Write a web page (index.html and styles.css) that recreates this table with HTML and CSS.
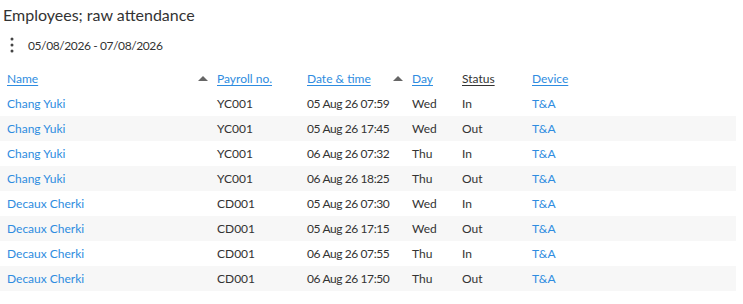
FILE: index.html
```html
<!DOCTYPE html>
<html>
<head>
<meta charset="utf-8">
<link rel="stylesheet" href="styles.css">
</head>
<body>
<div class="page">
  <h1 class="title">Employees; raw attendance</h1>
  <div class="range">
    <svg class="kebab" width="4" height="16" viewBox="0 0 4 16"><circle cx="2" cy="2" r="1.5"/><circle cx="2" cy="8" r="1.5"/><circle cx="2" cy="14" r="1.5"/></svg>
    <span class="num">05/08/2026 - 07/08/2026</span>
  </div>
  <table class="grid">
    <colgroup>
      <col class="c-name"><col class="c-pay"><col class="c-date"><col class="c-day"><col class="c-status"><col class="c-dev">
    </colgroup>
    <thead>
      <tr>
        <th><div class="hd"><a href="#">Name</a><span class="arrow"></span></div></th>
        <th><a href="#">Payroll no.</a></th>
        <th><div class="hd"><a href="#">Date &amp; time</a><span class="arrow"></span></div></th>
        <th><a href="#">Day</a></th>
        <th><span class="plain">Status</span></th>
        <th><a href="#">Device</a></th>
      </tr>
    </thead>
    <tbody>
      <tr><td><a href="#">Chang Yuki</a></td><td>YC001</td><td class="num">05 Aug 26 07:59</td><td>Wed</td><td>In</td><td><a href="#">T&amp;A</a></td></tr>
      <tr><td><a href="#">Chang Yuki</a></td><td>YC001</td><td class="num">05 Aug 26 17:45</td><td>Wed</td><td>Out</td><td><a href="#">T&amp;A</a></td></tr>
      <tr><td><a href="#">Chang Yuki</a></td><td>YC001</td><td class="num">06 Aug 26 07:32</td><td>Thu</td><td>In</td><td><a href="#">T&amp;A</a></td></tr>
      <tr><td><a href="#">Chang Yuki</a></td><td>YC001</td><td class="num">06 Aug 26 18:25</td><td>Thu</td><td>Out</td><td><a href="#">T&amp;A</a></td></tr>
      <tr><td><a href="#">Decaux Cherki</a></td><td>CD001</td><td class="num">05 Aug 26 07:30</td><td>Wed</td><td>In</td><td><a href="#">T&amp;A</a></td></tr>
      <tr><td><a href="#">Decaux Cherki</a></td><td>CD001</td><td class="num">05 Aug 26 17:15</td><td>Wed</td><td>Out</td><td><a href="#">T&amp;A</a></td></tr>
      <tr><td><a href="#">Decaux Cherki</a></td><td>CD001</td><td class="num">06 Aug 26 07:55</td><td>Thu</td><td>In</td><td><a href="#">T&amp;A</a></td></tr>
      <tr><td><a href="#">Decaux Cherki</a></td><td>CD001</td><td class="num">06 Aug 26 17:50</td><td>Thu</td><td>Out</td><td><a href="#">T&amp;A</a></td></tr>
    </tbody>
  </table>
</div>
</body>
</html>
```

FILE: styles.css
```css
html, body { margin: 0; padding: 0; background: #fff; }
body { font-family: Lato, "Noto Sans", sans-serif; color: #333; font-size: 12px; }
.page { width: 736px; }
.title { font-size: 16px; font-weight: 400; margin: 0; padding: 5px 0 0 3px; line-height: 20px; color: #333; }
.range { display: flex; align-items: center; gap: 14px; padding: 11px 0 0 10px; height: 18px; }
.kebab { fill: #444; }
.num { letter-spacing: -0.4px; }
.grid { border-collapse: collapse; width: 736px; table-layout: fixed; margin-top: 12px; }
.c-name { width: 210px; } .c-pay { width: 90px; } .c-date { width: 105px; } .c-day { width: 50px; } .c-status { width: 70px; } .c-dev { width: 211px; }
th, td { text-align: left; padding: 0 0 0 7px; height: 25px; font-weight: 400; white-space: nowrap; }
a { color: #2e8ce0; text-decoration: none; }
th a, .plain { text-decoration: underline; text-underline-offset: 2px; }
.plain { color: #333; }
.hd { display: flex; justify-content: space-between; align-items: center; padding-right: 2px; }
.arrow { width: 0; height: 0; border-left: 5px solid transparent; border-right: 5px solid transparent; border-bottom: 5px solid #666; }
tbody tr:nth-child(even) td { background: #f7f7f7; }
```
